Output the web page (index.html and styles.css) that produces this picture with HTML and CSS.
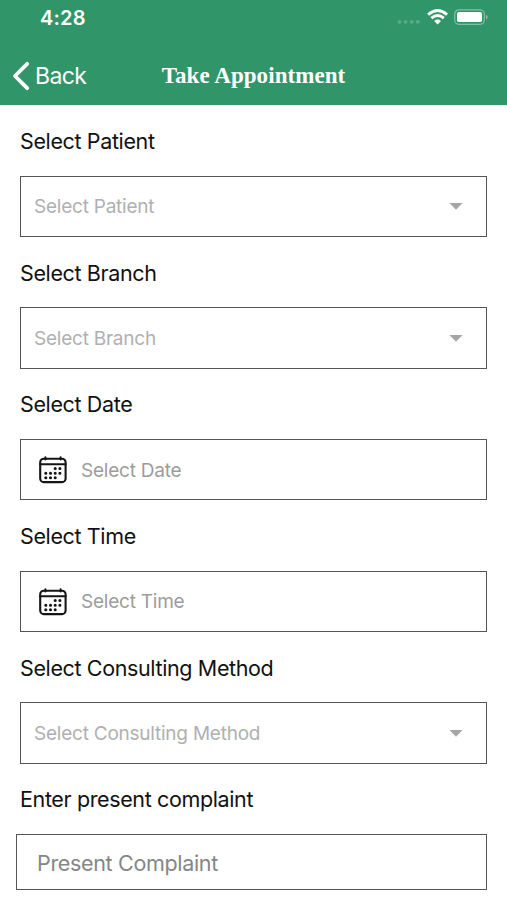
FILE: index.html
```html
<!DOCTYPE html>
<html lang="en">
<head>
<meta charset="utf-8">
<title>Take Appointment</title>
<link rel="stylesheet" href="styles.css">
</head>
<body>
<svg class="defs" width="0" height="0" aria-hidden="true">
  <symbol id="calendar" viewBox="0 0 28 28">
    <rect x="1.2" y="2.7" width="25.4" height="23.4" rx="3.6" fill="none" stroke="currentColor" stroke-width="2.1"/>
    <path d="M1.2 8.3H26.6M6.4 1.3v2.2M21.6 1.3v2.2" fill="none" stroke="currentColor" stroke-width="2" stroke-linecap="round"/>
    <path d="M16.2 12.5h.01M20.9 12.5h.01M6.8 17.2h.01M11.5 17.2h.01M16.2 17.2h.01M20.9 17.2h.01M6.8 21.7h.01M11.5 21.7h.01M16.2 21.7h.01" fill="none" stroke="currentColor" stroke-width="3.1" stroke-linecap="round"/>
  </symbol>
</svg>
<header class="header">
  <div class="status">
    <span class="clock">4:28</span>
    <svg class="indicators" width="92" height="18" viewBox="0 0 92 18" aria-hidden="true">
      <g fill="#5bab84"><circle cx="3.5" cy="13.8" r="1.9"/><circle cx="9.6" cy="13.8" r="1.9"/><circle cx="15.7" cy="13.8" r="1.9"/><circle cx="21.8" cy="13.8" r="1.9"/></g>
      <g fill="none" stroke="#fff" stroke-width="2.9"><path d="M32.1 6.6Q41.6-1.6 51.1 6.6"/><path d="M35.4 10.2Q41.6 4.9 47.8 10.2"/></g>
      <path d="M38.2 12.9Q41.6 10 45 12.9L41.6 16.5Z" fill="#fff"/>
      <rect x="58.7" y="1.9" width="29.6" height="14.4" rx="4.2" fill="none" stroke="#83c0a2" stroke-width="1.2"/>
      <rect x="61" y="4.1" width="25" height="10" rx="1.8" fill="#fff"/>
      <path d="M90 6.8q1.8.7 1.8 2.2T90 11.2Z" fill="#83c0a2"/>
    </svg>
  </div>
  <nav class="nav">
    <a class="back">
      <svg width="18" height="30" viewBox="0 0 18 30" aria-hidden="true"><path d="M15.2 2.8L3 15L15.2 27.2" fill="none" stroke="#fff" stroke-width="3.8" stroke-linecap="round" stroke-linejoin="round"/></svg>
      <span class="back-text">Back</span>
    </a>
    <h1 class="title">Take Appointment</h1>
  </nav>
</header>
<main class="form">
  <section class="field">
    <div class="label">Select Patient</div>
    <div class="box"><span class="hint">Select Patient</span><svg class="caret" width="14" height="7" viewBox="0 0 14 7"><path d="M.4 0H13.6L7 6.8Z"/></svg></div>
  </section>
  <section class="field">
    <div class="label">Select Branch</div>
    <div class="box"><span class="hint">Select Branch</span><svg class="caret" width="14" height="7" viewBox="0 0 14 7"><path d="M.4 0H13.6L7 6.8Z"/></svg></div>
  </section>
  <section class="field">
    <div class="label">Select Date</div>
    <div class="box picker"><svg class="calendar" width="28" height="28"><use href="#calendar"/></svg><span class="hint">Select Date</span></div>
  </section>
  <section class="field">
    <div class="label">Select Time</div>
    <div class="box picker"><svg class="calendar" width="28" height="28"><use href="#calendar"/></svg><span class="hint">Select Time</span></div>
  </section>
  <section class="field">
    <div class="label">Select Consulting Method</div>
    <div class="box"><span class="hint">Select Consulting Method</span><svg class="caret" width="14" height="7" viewBox="0 0 14 7"><path d="M.4 0H13.6L7 6.8Z"/></svg></div>
  </section>
  <section class="field">
    <div class="label">Enter present complaint</div>
    <div class="box complaint"><span class="hint">Present Complaint</span></div>
  </section>
</main>
</body>
</html>
```
FILE: styles.css
```css
* { box-sizing: border-box; }
body { margin: 0; height: 900px; overflow: hidden; background: #fff; color: #111; font-family: Inter, "Liberation Sans", sans-serif; }
.defs { display: block; }
.header { height: 105px; background: #31956a; color: #fff; }
.status { height: 46px; display: flex; justify-content: space-between; align-items: flex-start; padding: 5px 19px 0 40px; }
.clock { font-size: 20px; line-height: 26px; font-weight: 600; letter-spacing: .2px; }
.indicators { margin-top: 3px; }
.nav { height: 59px; display: grid; grid-template-columns: 1fr auto 1fr; align-items: center; padding-left: 12px; padding-right: 12px; }
.back { display: flex; align-items: center; gap: 5px; }
.back-text { font-size: 23px; letter-spacing: -.6px; }
.title { margin: 0; font: bold 23px/28px "Liberation Serif", serif; letter-spacing: .06px; }
.form { padding: 0 20px; }
.field { height: 131.7px; }
.label { height: 70.7px; line-height: 72px; font-size: 21.5px; letter-spacing: -.37px; white-space: nowrap; }
.box { height: 61.4px; border: 1px solid #555; display: flex; align-items: center; justify-content: space-between; padding: 1px 23px 0 13px; color: #b0b0b0; }
.hint { font-size: 19px; letter-spacing: -.23px; white-space: nowrap; }
.caret { fill: #a6a6a6; }
.picker { justify-content: flex-start; gap: 14px; padding-left: 18px; color: #9c9c9c; }
.calendar { color: #151515; }
.complaint { height: 56px; margin-left: -4px; padding-left: 20px; color: #868686; }
.complaint .hint { font-size: 21.5px; letter-spacing: -.33px; }
```
